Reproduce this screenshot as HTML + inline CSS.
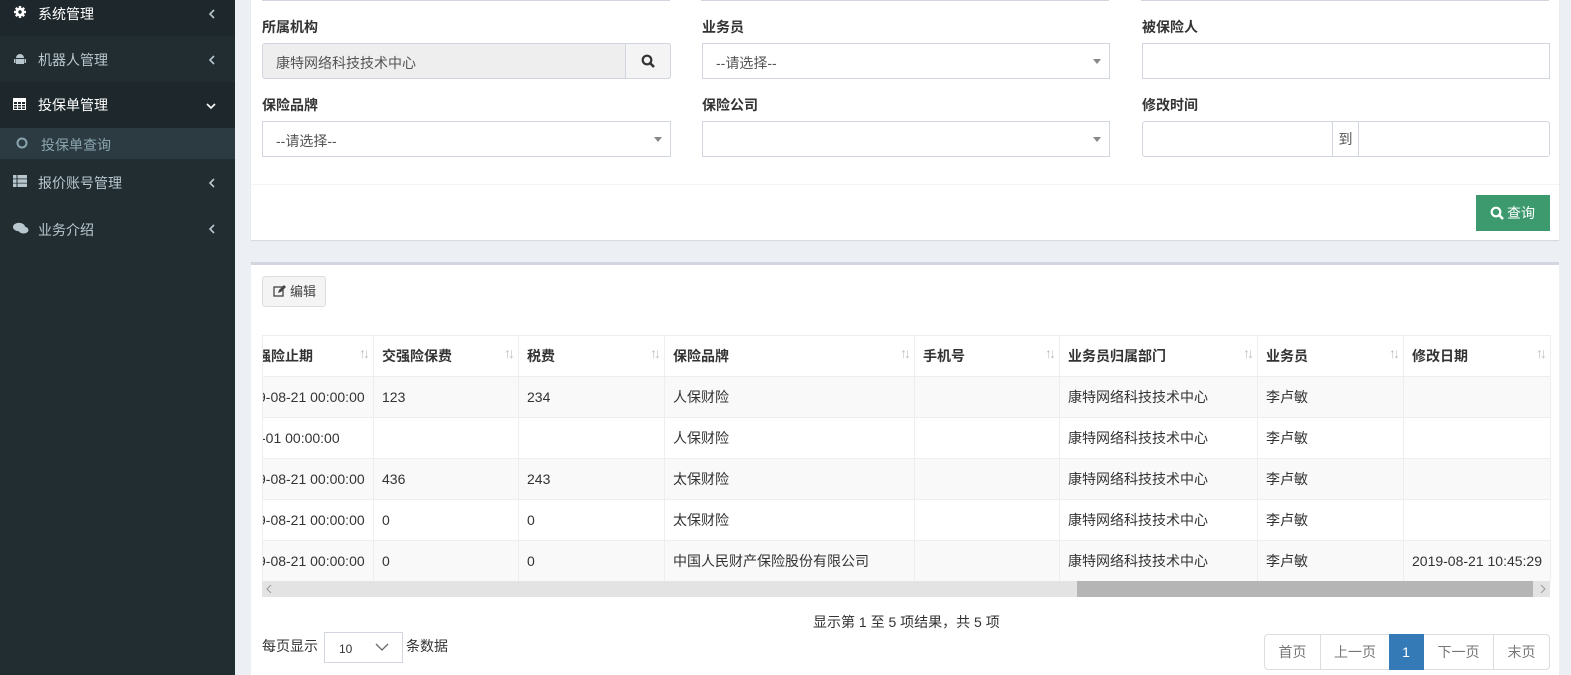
<!DOCTYPE html>
<html><head><meta charset="utf-8">
<style>
*{box-sizing:border-box;margin:0;padding:0}
body{width:1571px;height:675px;overflow:hidden;background:#ecf0f5;font-family:"Liberation Sans","Noto Sans CJK SC",sans-serif;font-size:14px;color:#333;position:relative}
.sb{position:absolute;left:0;top:0;width:235px;height:675px;background:#222d32}
.mi{position:absolute;left:0;width:235px;color:#fff;font-size:14px}
.mi .t{position:absolute;left:38px}
.mi .ar{position:absolute;left:208px}
.ab{position:absolute}
.panel{position:absolute;background:#fff}
.lbl{position:absolute;font-weight:bold;font-size:14px;color:#333}
.inp{position:absolute;border:1px solid #d2d6de;background:#fff;height:36px;font-size:14px;color:#555;padding:9px 13px}
.caret{position:absolute;right:8px;top:15px;width:0;height:0;border-left:4px solid transparent;border-right:4px solid transparent;border-top:5px solid #888}
table{position:absolute;left:262px;top:335px;border-collapse:collapse;font-size:14px;table-layout:fixed}
td,th{border:1px solid #eee;height:41px;padding:0 8px;text-align:left;white-space:nowrap;overflow:hidden;position:relative}
th{font-weight:bold}
tr.o td{background:#f9f9f9}
.s{position:absolute;right:6px;top:9px;color:#c0c0c0;font-size:14px;font-weight:bold;letter-spacing:-3px}
.pg{position:absolute;top:634px;height:36px;border:1px solid #ddd;border-left:none;color:#777;font-size:14px;text-align:center;line-height:34px}
</style></head><body>
<div class="sb">
 <div class="mi" style="top:0;height:36px;background:#1e282c"><svg class="ab" style="left:14px;top:6px" width="12" height="12" viewBox="0 0 12 12"><g stroke="#fff" stroke-width="2.4"><line x1="6" y1="0" x2="6" y2="12"/><line x1="0" y1="6" x2="12" y2="6"/><line x1="1.8" y1="1.8" x2="10.2" y2="10.2"/><line x1="10.2" y1="1.8" x2="1.8" y2="10.2"/></g><circle cx="6" cy="6" r="4.5" fill="#fff"/><circle cx="6" cy="6" r="1.7" fill="#1e282c"/></svg><span class="t" style="top:4px">系统管理</span><svg class="ar" style="top:9px" width="8" height="10"><path d="M6 1L2 5l4 4" fill="none" stroke="#b8c7ce" stroke-width="1.6"/></svg></div>
 <div class="mi" style="top:36px;height:46px;color:#b8c7ce"><svg class="ab" style="left:14px;top:17px" width="12" height="13" viewBox="0 0 12 13"><path d="M2 5a4 4 0 0 1 8 0z M2 6h8v5H2z" fill="#b8c7ce"/><rect x="0" y="6" width="1.5" height="4" fill="#b8c7ce"/><rect x="10.5" y="6" width="1.5" height="4" fill="#b8c7ce"/></svg><span class="t" style="top:14px">机器人管理</span><svg class="ar" style="top:19px" width="8" height="10"><path d="M6 1L2 5l4 4" fill="none" stroke="#b8c7ce" stroke-width="1.6"/></svg></div>
 <div class="mi" style="top:82px;height:46px;background:#1e282c"><svg class="ab" style="left:13px;top:16px" width="13" height="12" viewBox="0 0 13 12"><rect x="0.5" y="0.5" width="12" height="11" fill="none" stroke="#fff"/><path d="M0 3.5h13M0 6.5h13M0 9h13M4.5 3v9M8.5 3v9" stroke="#fff"/><rect x="0" y="0" width="13" height="3" fill="#fff"/></svg><span class="t" style="top:13px">投保单管理</span><svg class="ar" style="left:206px;top:20px" width="10" height="8"><path d="M1 2l4 4 4-4" fill="none" stroke="#fff" stroke-width="1.6"/></svg></div>
 <div class="mi" style="top:128px;height:31px;background:#2c3b41;color:#8aa4af"><svg class="ab" style="left:16px;top:9px" width="12" height="12"><circle cx="6" cy="6" r="4.5" fill="none" stroke="#8aa4af" stroke-width="2"/></svg><span class="t" style="left:41px;top:7px">投保单查询</span></div>
 <div class="mi" style="top:159px;height:46px;color:#b8c7ce"><svg class="ab" style="left:13px;top:16px" width="14" height="12" viewBox="0 0 14 12"><g fill="#b8c7ce"><rect x="0" y="0" width="3.5" height="3.5"/><rect x="4.5" y="0" width="9.5" height="3.5"/><rect x="0" y="4.3" width="3.5" height="3.5"/><rect x="4.5" y="4.3" width="9.5" height="3.5"/><rect x="0" y="8.5" width="3.5" height="3.5"/><rect x="4.5" y="8.5" width="9.5" height="3.5"/></g></svg><span class="t" style="top:14px">报价账号管理</span><svg class="ar" style="top:19px" width="8" height="10"><path d="M6 1L2 5l4 4" fill="none" stroke="#b8c7ce" stroke-width="1.6"/></svg></div>
 <div class="mi" style="top:205px;height:46px;color:#b8c7ce"><svg class="ab" style="left:13px;top:17px" width="16" height="13" viewBox="0 0 16 13"><ellipse cx="6" cy="5" rx="6" ry="4.3" fill="#b8c7ce"/><ellipse cx="10.5" cy="8" rx="5" ry="3.5" fill="#b8c7ce"/></svg><span class="t" style="top:15px">业务介绍</span><svg class="ar" style="top:19px" width="8" height="10"><path d="M6 1L2 5l4 4" fill="none" stroke="#b8c7ce" stroke-width="1.6"/></svg></div>
</div>

<div class="panel" style="left:251px;top:0;width:1308px;height:240px;box-shadow:0 1px 1px rgba(0,0,0,.1)">
 <div class="ab" style="left:11px;top:0;width:408px;height:1px;background:#d2d6de"></div>
 <div class="ab" style="left:450px;top:0;width:408px;height:1px;background:#d2d6de"></div>
 <div class="ab" style="left:890px;top:0;width:408px;height:1px;background:#d2d6de"></div>
 <div class="ab" style="left:0;top:184px;width:1308px;height:1px;background:#f4f4f4"></div>
</div>
<div class="lbl" style="left:262px;top:17px">所属机构</div>
<div class="inp" style="left:262px;top:43px;width:409px;background:#eee;border-radius:3px">康特网络科技技术中心</div>
<div class="ab" style="left:625px;top:43px;width:46px;height:36px;border:1px solid #d2d6de;background:#f4f4f4;border-radius:0 3px 3px 0"><svg class="ab" style="left:15px;top:10px" width="14" height="14"><circle cx="6" cy="6" r="4.3" fill="none" stroke="#333" stroke-width="2.2"/><line x1="9" y1="9" x2="13" y2="13" stroke="#333" stroke-width="2.6"/></svg></div>
<div class="lbl" style="left:702px;top:17px">业务员</div>
<div class="inp" style="left:702px;top:43px;width:408px">--请选择--<span class="caret"></span></div>
<div class="lbl" style="left:1142px;top:17px">被保险人</div>
<div class="inp" style="left:1142px;top:43px;width:408px"></div>
<div class="lbl" style="left:262px;top:95px">保险品牌</div>
<div class="inp" style="left:262px;top:121px;width:409px">--请选择--<span class="caret"></span></div>
<div class="lbl" style="left:702px;top:95px">保险公司</div>
<div class="inp" style="left:702px;top:121px;width:408px"><span class="caret"></span></div>
<div class="lbl" style="left:1142px;top:95px">修改时间</div>
<div class="inp" style="left:1142px;top:121px;width:408px;border-radius:3px"></div>
<div class="ab" style="left:1332px;top:121px;width:27px;height:36px;border-left:1px solid #d2d6de;border-right:1px solid #d2d6de;text-align:center;line-height:36px;font-size:14px;color:#555">到</div>
<div class="ab" style="left:1476px;top:195px;width:74px;height:36px;background:#3c9a6e;color:#fff;line-height:36px;font-size:14px"><svg class="ab" style="left:14px;top:11px" width="14" height="14"><circle cx="6" cy="6" r="4.3" fill="none" stroke="#fff" stroke-width="2.2"/><line x1="9" y1="9" x2="13" y2="13" stroke="#fff" stroke-width="2.6"/></svg><span class="ab" style="left:31px">查询</span></div>

<div class="panel" style="left:251px;top:262px;width:1308px;height:413px;border-top:3px solid #d2d6de"></div>
<div class="ab" style="left:262px;top:276px;width:64px;height:31px;border:1px solid #ddd;background:#f4f4f4;border-radius:3px;font-size:13px;color:#444;line-height:29px;padding-left:27px"><svg class="ab" style="left:10px;top:8px" width="13" height="13"><rect x="1" y="2" width="9" height="9" fill="none" stroke="#444" stroke-width="1.3"/><path d="M5 8l1-3 5-5 2 2-5 5z" fill="#444"/></svg>编辑</div>

<table>
<colgroup><col style="width:111px"><col style="width:145px"><col style="width:146px"><col style="width:250px"><col style="width:145px"><col style="width:198px"><col style="width:146px"><col style="width:146px"></colgroup>
<tr><th style="padding-left:0;text-indent:-6px">强险止期<span class="s">↑↓</span></th><th>交强险保费<span class="s">↑↓</span></th><th>税费<span class="s">↑↓</span></th><th>保险品牌<span class="s">↑↓</span></th><th>手机号<span class="s">↑↓</span></th><th>业务员归属部门<span class="s">↑↓</span></th><th>业务员<span class="s">↑↓</span></th><th>修改日期<span class="s">↑↓</span></th></tr>
<tr class="o"><td style="padding-left:0;text-indent:-5px">9-08-21 00:00:00</td><td>123</td><td>234</td><td>人保财险</td><td></td><td>康特网络科技技术中心</td><td>李卢敏</td><td></td></tr>
<tr><td style="padding-left:0;text-indent:-2px">-01 00:00:00</td><td></td><td></td><td>人保财险</td><td></td><td>康特网络科技技术中心</td><td>李卢敏</td><td></td></tr>
<tr class="o"><td style="padding-left:0;text-indent:-5px">9-08-21 00:00:00</td><td>436</td><td>243</td><td>太保财险</td><td></td><td>康特网络科技技术中心</td><td>李卢敏</td><td></td></tr>
<tr><td style="padding-left:0;text-indent:-5px">9-08-21 00:00:00</td><td>0</td><td>0</td><td>太保财险</td><td></td><td>康特网络科技技术中心</td><td>李卢敏</td><td></td></tr>
<tr class="o"><td style="padding-left:0;text-indent:-5px">9-08-21 00:00:00</td><td>0</td><td>0</td><td>中国人民财产保险股份有限公司</td><td></td><td>康特网络科技技术中心</td><td>李卢敏</td><td>2019-08-21 10:45:29</td></tr>
</table>
<div class="ab" style="left:262px;top:581px;width:1288px;height:16px;background:#e3e3e3"><svg class="ab" style="left:4px;top:4px" width="6" height="8"><path d="M5 0L1 4l4 4" fill="none" stroke="#999"/></svg><div class="ab" style="left:815px;top:0;width:456px;height:16px;background:#b5b5b5"></div><svg class="ab" style="left:1278px;top:4px" width="6" height="8"><path d="M1 0l4 4-4 4" fill="none" stroke="#999"/></svg></div>

<div class="ab" style="left:813px;top:612px;font-size:14px">显示第 1 至 5 项结果，共 5 项</div>
<div class="ab" style="left:262px;top:636px;font-size:14px">每页显示</div>
<div class="ab" style="left:324px;top:632px;width:79px;height:31px;border:1px solid #d2d6de;font-size:12px;padding:9px 0 0 14px">10<svg class="ab" style="left:50px;top:10px" width="14" height="9"><path d="M1 1l6 6 6-6" fill="none" stroke="#666" stroke-width="1.3"/></svg></div>
<div class="ab" style="left:406px;top:636px;font-size:14px">条数据</div>

<div class="pg" style="left:1264px;width:57px;border-left:1px solid #ddd;border-radius:4px 0 0 4px">首页</div>
<div class="pg" style="left:1321px;width:69px">上一页</div>
<div class="pg" style="left:1389px;width:35px;background:#337ab7;color:#fff;border-color:#337ab7">1</div>
<div class="pg" style="left:1424px;width:70px">下一页</div>
<div class="pg" style="left:1494px;width:56px;border-radius:0 4px 4px 0">末页</div>
</body></html>
